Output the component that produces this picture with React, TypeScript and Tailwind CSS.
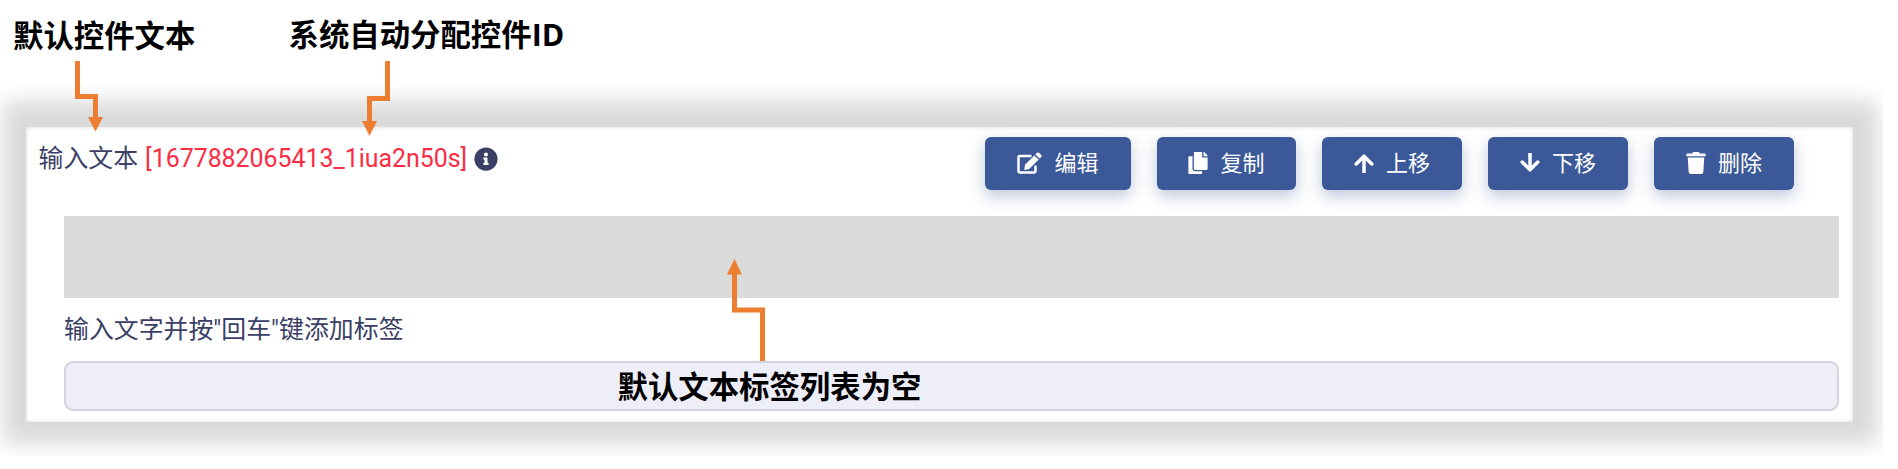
import React from "react";
import { FaCopy, FaTrash, FaInfoCircle } from "react-icons/fa";

const sans = "font-['Roboto','Noto_Sans_CJK_SC',sans-serif]";

type IconProps = { className?: string };

function EditIcon({ className }: IconProps) {
  return (
    <svg className={className} viewBox="0 0 25 22">
      <path
        d="M14.500 4H2.700Q1.500 4 1.500 5.200V19.300Q1.500 20.500 2.700 20.500H17.300Q18.500 20.500 18.500 19.300V13.500"
        fill="none"
        stroke="currentColor"
        strokeWidth="2.500"
      />
      <path d="M17.300 3.400L21.700 7.600L12.200 16.900L7.300 18L8 12.800Z" fill="currentColor" />
      <path
        d="M18.300 2.500L20 .8Q21 0 22 .8L24.200 2.900Q25.100 3.900 24.200 4.900L22.700 6.600Z"
        fill="currentColor"
      />
    </svg>
  );
}

function ArrowUpIcon({ className }: IconProps) {
  return (
    <svg className={className} viewBox="0 0 20 22" fill="none" stroke="currentColor" strokeWidth="3.500">
      <path d="M10 4V21" strokeLinecap="butt" />
      <path d="M2.200 12L10 4.200L17.800 12" strokeLinecap="round" strokeLinejoin="round" />
    </svg>
  );
}

function ArrowDownIcon({ className }: IconProps) {
  return <ArrowUpIcon className={`rotate-180 ${className ?? ""}`} />;
}

const actions = [
  { label: "编辑", Icon: EditIcon, box: "w-[146px]", icon: "h-[22px] w-[25px]" },
  { label: "复制", Icon: FaCopy, box: "w-[139px]", icon: "h-[22px] w-[20px]" },
  { label: "上移", Icon: ArrowUpIcon, box: "w-[140px]", icon: "h-[22px] w-[20px]" },
  { label: "下移", Icon: ArrowDownIcon, box: "w-[140px]", icon: "h-[22px] w-[20px]" },
  { label: "删除", Icon: FaTrash, box: "w-[140px]", icon: "h-[22px] w-[20px]" },
];

function Callout({ children, className }: { children: React.ReactNode; className: string }) {
  return (
    <div
      className={`absolute whitespace-nowrap font-['Open_Sans','Noto_Sans_CJK_SC',sans-serif] text-[30.4px] leading-[36px] font-bold text-black ${className}`}
    >
      {children}
    </div>
  );
}

export default function App() {
  return (
    <div className={`relative h-[469px] w-[1898px] overflow-hidden bg-white ${sans}`}>
      <div className="h-[456px] w-[1883px] overflow-hidden pt-[127px] pl-[26px]">
        <section className="h-[295px] w-[1827px] bg-white pt-[10px] pr-[14px] pl-[12px] shadow-[1px_-2px_20px_24px_#dadada,inset_0_0_4px_#dadada]">
          <header className="flex h-[79px] justify-between pr-[45px]">
            <div className="flex h-[44px] items-center pl-[0.5px] text-[24.9px] text-[#3b3f66]">
              <span>输入文本</span>
              <span className="ml-[7px] text-[#fb2c43]">[1677882065413_1iua2n50s]</span>
              <FaInfoCircle className="ml-[7px] h-[24px] w-[24px]" />
            </div>
            <div className="flex gap-[26px]">
              {actions.map(({ label, Icon, box, icon }) => (
                <button
                  key={label}
                  className={`flex h-[53px] items-center justify-center gap-[12px] rounded-[6px] bg-[#3b5998] pb-[1px] text-[22px] text-white shadow-[0_6px_16px_rgba(59,89,152,0.35)] ${box}`}
                >
                  <Icon className={icon} />
                  <span>{label}</span>
                </button>
              ))}
            </div>
          </header>
          <div className="pl-[26px]">
            <div className="h-[82px] bg-[#dbdbdb]" />
            <div className="flex h-[63px] items-center text-[24.9px] text-[#3b3f66]">
              输入文字并按"回车"键添加标签
            </div>
            <div className="h-[50px] rounded-[9px] border-2 border-[#d3d3df] bg-[#eeeef8]" />
          </div>
        </section>
      </div>

      <Callout className="top-[18px] left-[13px]">默认控件文本</Callout>
      <Callout className="top-[17px] left-[288.5px]">系统自动分配控件ID</Callout>
      <Callout className="top-[369px] left-[617.5px]">默认文本标签列表为空</Callout>

      <svg className="absolute inset-0 h-[469px] w-[1898px]" viewBox="0 0 1898 469">
        <g fill="none" stroke="#ed7d31" strokeWidth="5">
          <path d="M77.5 61V96.500H95.500V118" />
          <path d="M387.500 61V98.500H369.500V122" />
          <path d="M762.500 361V310H734.500V273" />
        </g>
        <g fill="#ed7d31">
          <path d="M88 117H103L95.500 131.500Z" />
          <path d="M362 121H377L369.500 136Z" />
          <path d="M727 274.500H742L734.500 259Z" />
        </g>
      </svg>
    </div>
  );
}
